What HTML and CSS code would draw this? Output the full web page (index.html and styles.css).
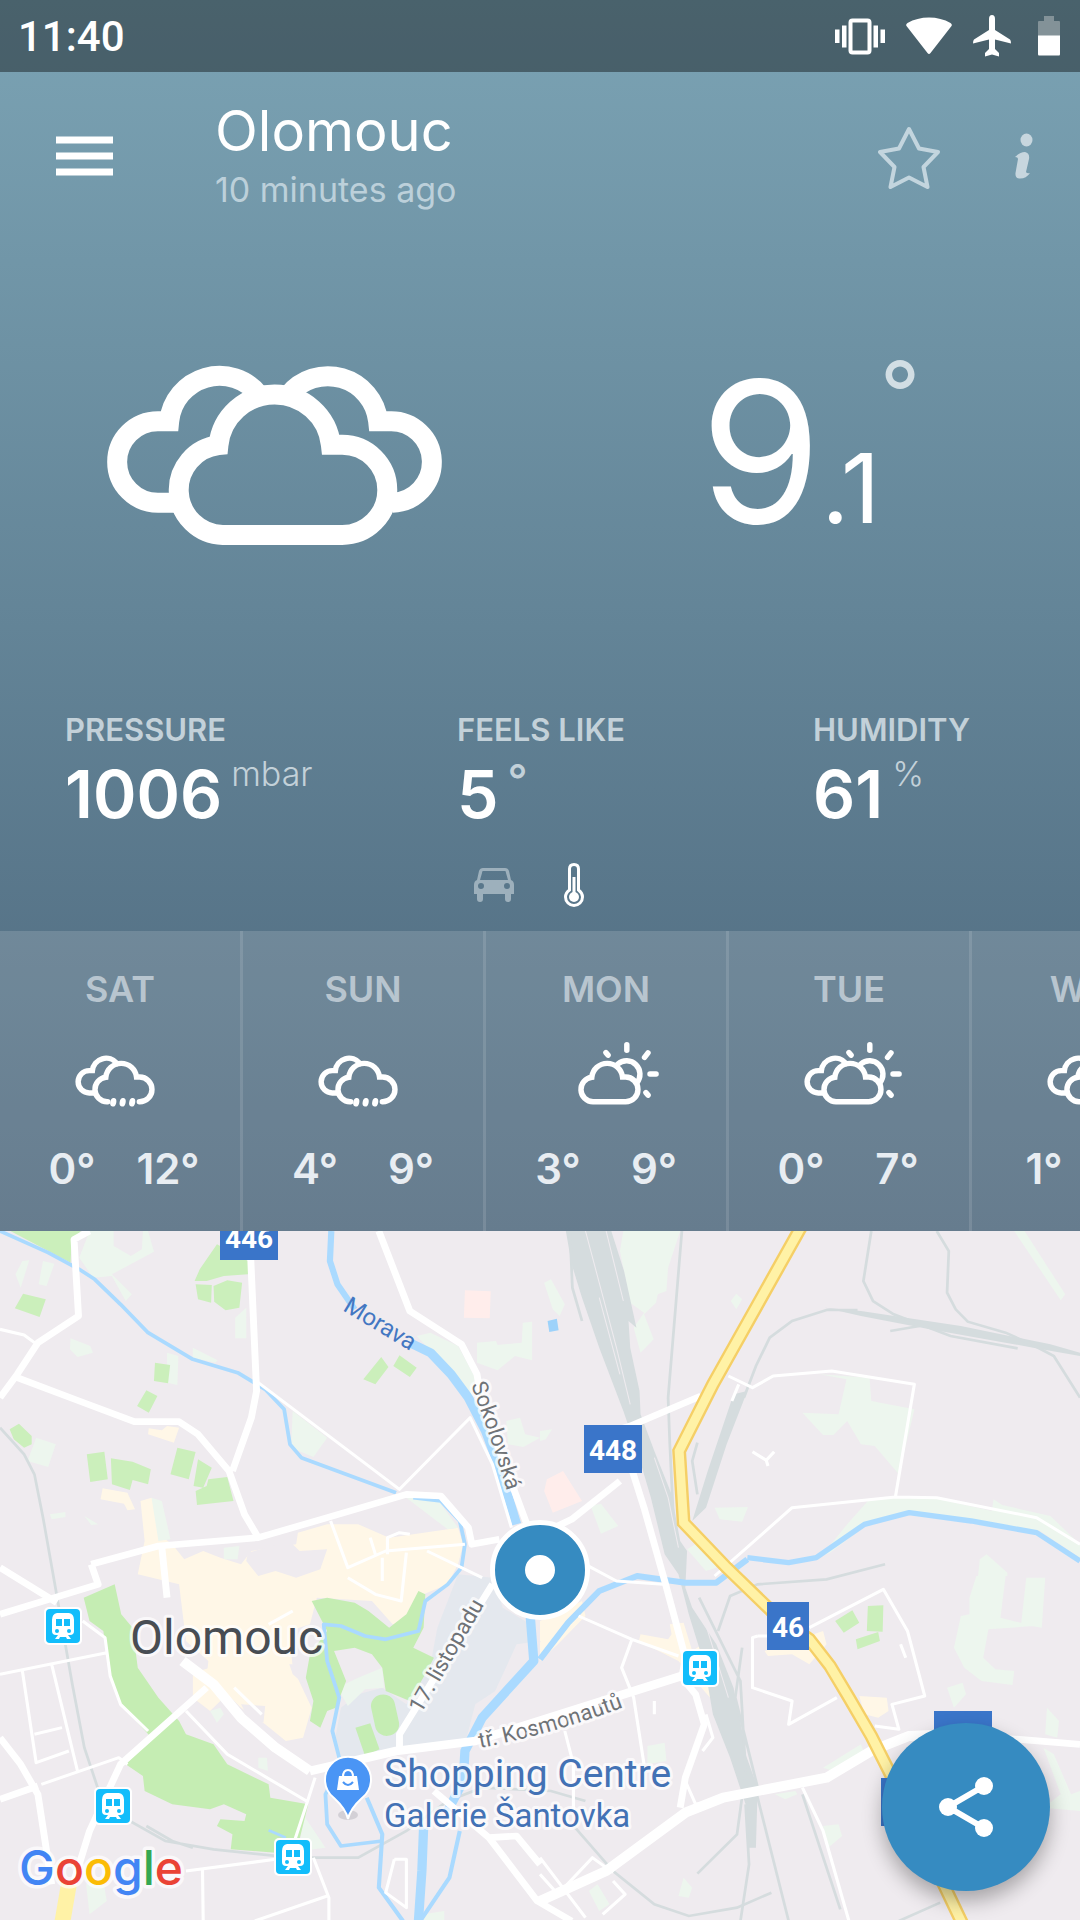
FILE: index.html
```
<!DOCTYPE html>
<html lang="en">
<head>
    <meta charset="UTF-8">
    <meta name="viewport" content="width=device-width, initial-scale=1.0">
    <title>Olomouc - Weather</title>
    <link rel="stylesheet" href="styles.css">
</head>
<body>
    <!-- Shared weather icon parts -->
    <svg class="defs" width="0" height="0" aria-hidden="true">
        <defs>
            <path id="cloud" d="M430 615A135.500 135.500 0 0 1 417 345A170 170 0 0 1 755 344H789A135.500 135.500 0 0 1 789 615Z"/>
            <path id="cloud-open" d="M438 615H430A135.500 135.500 0 0 1 417 345A170 170 0 0 1 755 344H789A135.500 135.500 0 0 1 789 615H786"/>
            <path id="cloud-left" d="M285 518H235A122.500 122.500 0 0 1 235 273H269A152 152 0 0 1 540 195"/>
            <path id="cloud-right" d="M940 518A122.500 122.500 0 0 0 932 273H897A152 152 0 0 0 627 195"/>
            <g id="drops">
                <ellipse cx="499" cy="621" rx="33" ry="47" transform="rotate(12 499 621)"/>
                <ellipse cx="602" cy="621" rx="33" ry="47" transform="rotate(12 602 621)"/>
                <ellipse cx="707" cy="621" rx="33" ry="47" transform="rotate(12 707 621)"/>
            </g>
            <g id="sun">
                <path d="M703 200A148 148 0 0 1 912 408"/>
                <path d="M802-13V50M997 127L1035 78M1057 310H1124M1012 515L1036 542M572 75L596 102"/>
            </g>
            <g id="train">
                <rect x="-19" y="-19" width="38" height="38" rx="5" fill="#fff"/>
                <rect x="-17" y="-17" width="34" height="34" rx="4" fill="#12bdfb"/>
                <path d="M-6-13H6Q11-12 11-6V5Q11 9 7 9H-7Q-11 9-11 5V-6Q-11-12-6-13Z" fill="#fff"/>
                <path d="M-7-7H-1V0H-7ZM1-7H7V0H1Z" fill="#12bdfb"/>
                <circle cx="-6" cy="5" r="2" fill="#12bdfb"/>
                <circle cx="6" cy="5" r="2" fill="#12bdfb"/>
                <path d="M-5 9L-8 13H-4L-3 11H3L4 13H8L5 9Z" fill="#fff"/>
            </g>
        </defs>
    </svg>

    <section class="weather">
        <div class="status-bar">
            <time class="clock">11:40</time>
            <div class="status-icons">
                <svg width="50" height="40" viewBox="0 0 50 40">
                    <rect x="15.500" y="4.500" width="19" height="32" rx="2" fill="none" stroke="#fff" stroke-width="4"/>
                    <path d="M0 13.500H4.500V27H0ZM7 9.500H11.500V31.500H7ZM38.500 9.500H43V31.500H38.500ZM45.500 13.500H50V27H45.500Z" fill="#fff"/>
                </svg>
                <svg width="46" height="40" viewBox="0 0 46 40">
                    <path d="M.5 10Q-.5 8.500 1.500 7Q11 1.500 23 1.500T44.500 7Q46.500 8.500 45.500 10L24.500 37Q23 39 21.500 37Z" fill="#fff"/>
                </svg>
                <svg width="38" height="42" viewBox="0 0 38 42">
                    <path d="M19 0Q22 0 22 4V15L37 24.500Q38 25.500 38 28.500L22 24.500V34L26 38V41.500L19 39.500L12 41.500V38L16 34V24.500L0 28.500Q0 25.500 1 24.500L16 15V4Q16 0 19 0Z" fill="#fff"/>
                </svg>
                <svg width="22" height="40" viewBox="0 0 22 40">
                    <path d="M6 0H16V5H21Q22 5 22 6V20H0V6Q0 5 1 5H6Z" fill="#839298"/>
                    <path d="M0 19.500H22V38Q22 39.500 21 39.500H1Q0 39.500 0 38Z" fill="#fff"/>
                </svg>
            </div>
        </div>

        <header class="top-bar">
            <button class="icon-button" type="button" aria-label="Menu">
                <svg width="57" height="40" viewBox="0 0 57 40">
                    <path d="M0 4H57M0 20H57M0 36H57" stroke="#fff" stroke-width="7"/>
                </svg>
            </button>
            <div class="place">
                <h1>Olomouc</h1>
                <p>10 minutes ago</p>
            </div>
            <button class="icon-button" type="button" aria-label="Add to favourites">
                <svg width="62" height="66" viewBox="0 0 62 66">
                    <path d="M31 6L41 25.500L60 29L45.500 44L49.500 64L31 54.500L12.500 64L16.500 44L2 29L21 25.500Z" fill="none" stroke="#c3d5de" stroke-width="4" stroke-linejoin="round"/>
                </svg>
            </button>
            <button class="icon-button" type="button" aria-label="Information">
                <svg width="20" height="46" viewBox="0 0 20 46">
                    <ellipse cx="12.500" cy="7" rx="6" ry="6.500" fill="#c7d6de"/>
                    <path d="M1 24Q6 19 11 19Q16 20 15 26L12 39Q13 41 16 40Q12 46 5 45.500Q1 45 1.500 40L4 26Q4 24 1 24Z" fill="#c7d6de"/>
                </svg>
            </button>
        </header>

        <div class="current">
            <svg class="current-icon" viewBox="82 104 1004 542" role="img" aria-label="Overcast">
                <use href="#cloud-left"/>
                <use href="#cloud-right"/>
                <use href="#cloud"/>
            </svg>
            <div class="temperature">
                <span class="whole">9</span><span class="decimal">.1</span><span class="degree">°</span>
            </div>
        </div>

        <dl class="metrics">
            <div>
                <dt>PRESSURE</dt>
                <dd>1006<span class="unit">mbar</span></dd>
            </div>
            <div>
                <dt>FEELS LIKE</dt>
                <dd>5<span class="unit unit-degree">°</span></dd>
            </div>
            <div>
                <dt>HUMIDITY</dt>
                <dd>61<span class="unit">%</span></dd>
            </div>
        </dl>

        <div class="modes">
            <button class="mode" type="button" aria-label="Driving">
                <svg width="40" height="34" viewBox="0 0 40 34">
                    <path fill-rule="evenodd" fill="#9db0bc" d="M9 0H31Q34 0 35 3L37 12Q40 13 40 17V26H37V31Q37 34 34 34T31 31V26H9V31Q9 34 6 34T3 31V26H0V17Q0 13 3 12L5 3Q6 0 9 0ZM9 3Q8 3 8 5L6 12H34L32 5Q32 3 31 3ZM7 15A3 3 0 1 0 7 21A3 3 0 1 0 7 15ZM33 15A3 3 0 1 0 33 21A3 3 0 1 0 33 15Z"/>
                </svg>
            </button>
            <button class="mode" type="button" aria-label="Thermometer">
                <svg width="20" height="44" viewBox="0 0 20 44">
                    <path d="M5.500 6Q5.500 1.500 10 1.500T14.500 6V27Q18.500 30 18.500 34A8.500 8.500 0 0 1 1.500 34Q1.500 30 5.500 27Z" fill="none" stroke="#fff" stroke-width="3"/>
                    <path d="M10 14V32" stroke="#fff" stroke-width="3"/>
                    <circle cx="10" cy="34" r="5" fill="#fff"/>
                </svg>
            </button>
        </div>

        <ul class="forecast">
            <li>
                <h2>SAT</h2>
                <svg class="day-icon" viewBox="-32 -75 1210 770" role="img" aria-label="Rain">
                    <use href="#cloud-left"/><use href="#cloud-open"/><use class="filled" href="#drops"/>
                </svg>
                <div class="range"><span>0°</span><span>12°</span></div>
            </li>
            <li>
                <h2>SUN</h2>
                <svg class="day-icon" viewBox="-32 -75 1210 770" role="img" aria-label="Rain">
                    <use href="#cloud-left"/><use href="#cloud-open"/><use class="filled" href="#drops"/>
                </svg>
                <div class="range"><span>4°</span><span>9°</span></div>
            </li>
            <li>
                <h2>MON</h2>
                <svg class="day-icon" viewBox="-32 -75 1210 770" role="img" aria-label="Partly cloudy">
                    <use href="#sun"/><use href="#cloud"/>
                </svg>
                <div class="range"><span>3°</span><span>9°</span></div>
            </li>
            <li>
                <h2>TUE</h2>
                <svg class="day-icon" viewBox="-32 -75 1210 770" role="img" aria-label="Mostly cloudy">
                    <use href="#cloud-left"/><use href="#sun"/><use href="#cloud"/>
                </svg>
                <div class="range"><span>0°</span><span>7°</span></div>
            </li>
            <li>
                <h2>WED</h2>
                <svg class="day-icon" viewBox="-32 -75 1210 770" role="img" aria-label="Mostly cloudy">
                    <use href="#cloud-left"/><use href="#sun"/><use href="#cloud"/>
                </svg>
                <div class="range"><span>1°</span><span>8°</span></div>
            </li>
        </ul>
    </section>

    <section class="map">
        <svg class="map-canvas" viewBox="0 0 1080 690" preserveAspectRatio="xMidYMin slice" role="img" aria-label="Map of Olomouc">
            <g transform="scale(.34439 .33333)">
                <!-- Built-up areas -->
                <g class="urban">
                    <path d="M408 810L440 800L460 850L480 925L500 940L535 985L590 960L640 980L700 1000L730 960L860 940L865 905L950 880L1040 880L1130 920L1230 905L1330 890L1345 940L1330 1000L1300 1060L1230 1090L1215 1160L1140 1180L1080 1110L920 1100L900 1180L840 1200L850 1310L905 1430L880 1520L830 1530L770 1480L700 1430L660 1390L600 1340L605 1290L540 1230L520 1060L400 1030L420 930Z"/>
                    <path d="M432 592L470 598L485 585L520 590L505 635L430 610ZM298 772L370 785L392 835L370 838L360 818L292 805Z"/>
                    <path d="M1568 1170L1690 1110L1700 1155L1620 1240L1568 1290ZM1860 1210L1940 1225L1950 1210L1945 1180L1985 1175L2010 1260L2040 1240L2070 1410L1970 1290L1855 1230ZM2220 1260L2390 1200L2400 1240L2350 1300L2300 1270L2230 1275ZM2495 1395L2575 1400L2580 1440L2550 1460L2510 1450Z"/>
                    <path d="M560 1325L610 1310L640 1410L610 1440L560 1400Z"/>
                </g>
                <g class="ground">
                    <path d="M720 965L840 930L870 960L950 955L930 1015L860 1040L800 1020L750 1035L715 990Z"/>
                    <path d="M840 1300L900 1300L895 1370L850 1330ZM700 1420L770 1425L765 1475L720 1460Z"/>
                </g>

                <!-- Campus -->
                <path class="campus" d="M1270 1190L1330 1030L1430 1040L1460 1130L1540 1180L1540 1310L1380 1420L1350 1540L1160 1570L1000 1590L970 1540L990 1430L1040 1390L1110 1370L1180 1420L1250 1300Z"/>

                <!-- Parks -->
                <g class="pale">
                    <path d="M260 0H430L447 62L325 130L383 190L365 210L325 135L270 140L230 80Z"/>
                    <path d="M45 130L65 90L85 88L60 170ZM125 90L158 98L135 165L112 160ZM205 322L262 345L270 365L225 378L203 355ZM485 365L518 375L515 462L485 455ZM560 350L632 388L625 395L560 380ZM683 260L715 230V322H683ZM850 540L950 620L910 678L845 650Z"/>
                    <path d="M105 620L162 640L140 708L80 690ZM145 850L190 843V858L150 865ZM245 855L285 880L265 882ZM440 800L470 810L495 925L460 930ZM650 950L695 945L690 985H650Z"/>
                    <path d="M1180 800L1270 805L1330 890L1300 895ZM1210 315L1250 305L1330 345L1380 440L1370 490ZM1385 335L1440 330L1445 342L1515 335L1518 275L1545 272V388L1495 375L1445 418L1385 395ZM1470 570L1510 560L1525 610L1568 620L1520 648L1475 640Z"/>
                    <path d="M1810 0H1975L1940 110L1935 180L1910 190L1905 215L1870 250L1898 325L1860 365L1840 290L1870 245L1830 215L1800 60ZM1580 155L1600 145L1640 220L1625 255L1605 235ZM2945 0H2975L3093 190L3080 208ZM2122 210L2138 188L2155 205L2138 235ZM1715 825L1745 818L1795 885L1745 908ZM2075 830L2172 828L2155 872L2090 865ZM1568 600L1603 595L1585 625L1568 630Z"/>
                    <path d="M2380 430L2525 440L2530 510L2655 535L2610 730L2540 645L2500 640L2460 570L2420 612H2390L2330 545L2435 550L2458 445ZM2385 975L2460 880L2520 810L2600 800H2710L2880 840L2885 805L2910 822L3050 855L3136 940V980L3020 900L2870 880L2640 850L2520 880L2410 965ZM2845 985L2865 970L2925 1025V1035H2840ZM1995 955L2050 920L2080 1010L2050 1020Z"/>
                    <path d="M2835 1035H2920L2905 1160L3000 1185L2870 1195L2855 1280L2890 1315L2945 1320L2940 1362L2850 1350L2800 1310L2770 1250L2790 1155L2815 1150L2815 1100ZM2980 1040H3035L3025 1190L2965 1180ZM2750 1370L2795 1355L2805 1390L2770 1430ZM3040 1430L3075 1470L3070 1520L3035 1510ZM3030 1550L3060 1570L3110 1690L3136 1680V1740L3030 1730L3080 1690ZM2390 1610L2500 1540L2510 1570L2420 1620ZM1880 1545L1930 1535L1935 1590L1880 1600ZM2390 1785L2435 1780L2445 1815L2405 1850ZM1985 1940L2010 1970L2000 2000L1970 1995ZM2250 1690L2310 1680L2315 1690L2280 1705Z"/>
                    <path d="M980 1370L1040 1340L1110 1310L1115 1370L1060 1375L1010 1425ZM880 1750L945 1850L870 1860ZM750 1580L775 1580L778 1620L750 1610ZM610 1440L640 1430L650 1450L630 1475ZM250 1960L300 1950L310 2010L260 2050ZM1710 1980L1735 1960L1770 2020L1740 2040ZM1230 2050L1290 2040V2070H1230Z"/>
                </g>
                <g class="park">
                    <path d="M30 0H235L208 30L205 95Z"/>
                    <path d="M565 150L580 115L610 70L630 40L720 90V130L650 135L600 150ZM568 160L615 162L613 215L575 205ZM620 165L660 148L703 155L695 230L655 238L622 212Z"/>
                    <path d="M67 188L133 205L115 258L43 232ZM450 395L494 402L488 457L447 450ZM425 478L457 495L432 545L398 525ZM1107 378L1128 408L1090 460L1055 445ZM1160 373L1210 410L1190 438L1142 405Z"/>
                    <path d="M55 578L92 615V640L70 650L40 625L28 595ZM252 670L303 662L313 745L262 753ZM322 682L385 692L438 715L430 760L385 747L377 777L325 760ZM515 650L568 663L548 745L495 730ZM575 685L615 710L590 770L562 765ZM568 780L600 765L605 745L660 738L678 810L572 822Z"/>
                    <path d="M2425 1170L2475 1138L2495 1175L2450 1205ZM2520 1125L2565 1123L2563 1202L2517 1200ZM2485 1225L2550 1203L2555 1230L2490 1255Z"/>
                </g>
                <g class="park deep">
                    <path d="M243 1100L333 1060L352 1150L385 1190L400 1310L460 1400L520 1470L540 1510L620 1540L660 1600L780 1660L785 1700L895 1720L860 1865H800L670 1855L675 1810L630 1785L640 1765L710 1770L715 1750L650 1720L610 1735L500 1720L420 1680L415 1635L365 1600L440 1520L350 1420L320 1340L300 1200L260 1170Z"/>
                    <path d="M905 1110L950 1100L1030 1115L1070 1140L1130 1190L1180 1150L1215 1080L1235 1090L1230 1190L1200 1250L1260 1280L1240 1320L1190 1410L1120 1380L1110 1310L1080 1270L1030 1250L970 1260L1005 1350L975 1430L950 1440L930 1490L900 1470L910 1410L888 1340L900 1270L950 1200Z"/>
                    <path d="M1032 1490L1075 1477L1102 1555L1060 1575Z"/>
                    <rect x="1083" y="1390" width="70" height="125" rx="34" transform="rotate(-12 1118 1452)"/>
                </g>
                <g class="hospital">
                    <path d="M1350 178L1425 181L1422 262L1347 260ZM1588 745L1635 720L1690 810L1605 845L1580 780Z"/>
                </g>
                <path class="ground" d="M330 0H415L412 55L380 75L330 45ZM1500 1240L1570 1230L1530 1330L1420 1420Z"/>

                <!-- Railways -->
                <g class="rail-area">
                    <path d="M1643 0H1775L1812 120L1848 290L1825 270L1830 350L1857 480L1860 550L1900 660L1950 790L1975 930L1995 960L1990 1070L2010 1130L2080 1240L2130 1370L2155 1500L2165 1570L2200 1670L2195 1850L2170 1850L2165 1720L2120 1580L2070 1450L2045 1300L2000 1150L1970 1030L1930 970L1890 800L1850 660L1810 540L1740 350L1690 200L1660 100Z"/>
                    <path d="M2395 230L2500 240L2790 285L3050 340L3136 365V375L3000 350L2700 295L2500 255ZM2130 490L2170 480L2110 640L2050 830L2010 870L2055 720Z"/>
                </g>
                <g class="rail">
                    <path d="M1655 0L1662 170L1690 270M1980 0L1940 500L1945 640L1960 960M2530 0L2507 150L2535 210L2595 250L2760 315L2955 352M2720 0L2755 60L2750 185L2775 235L2810 272L2920 305L3005 345L3060 375L3136 500M2585 300L2670 285"/>
                    <path d="M2160 500L2195 405L2235 320L2300 270L2400 237H2490M2025 635L2010 690L2025 790M2570 1000L2400 1045L2200 1060L2120 1095L2085 1200M2155 1250L2135 1400L2200 1670M2030 1100L2150 1350L2165 1620L2140 1810L2025 1928M2165 1720L2175 1900L2150 2070M2195 1680L2290 2070"/>
                    <path d="M0 590L70 670L100 730L125 860L155 1035L210 1360L245 1550L290 1690L360 1760L480 1830L620 1855L850 1880L1040 1880L1180 1800L1300 1710L1400 1670L1600 1680L1700 1710M425 1785L500 1830L560 1850M1670 1790L1780 1920L1900 2020L2000 2055L2140 2030L2240 1985M2330 1690L2440 2035M2610 2070L2730 2015"/>
                </g>
                <path class="rail-gap" d="M1700 0L1790 350L1830 520M1760 0L1810 210M1740 200L1800 430M1900 680L1940 800L1970 950M2040 1150L2115 1400"/>

                <!-- Rivers -->
                <g class="water">
                    <path stroke-width="11" d="M0 0L140 65L230 115L275 145L350 220L430 305L560 385L690 425L770 475L825 535L842 640L875 680L1150 785"/>
                    <path stroke-width="11" d="M1200 800L1280 810L1335 870L1350 940L1340 1010L1300 1060L1235 1110L1215 1200L1120 1225L1060 1215L990 1185L940 1180L950 1290L985 1400L965 1500L990 1600L945 1690L950 1780L990 1845L1110 1830"/>
                    <path stroke-width="18" d="M962 0L958 90L980 160L1030 235"/>
                    <path stroke-width="27" d="M1190 335L1250 365L1310 430L1360 500L1410 600L1450 710L1500 880"/>
                    <path stroke-width="27" d="M1540 1160L1550 1290L1400 1460L1350 1560L1345 1650L1300 1740"/>
                    <path stroke-width="27" d="M1230 1790L1225 1920L1215 2070"/>
                    <path stroke-width="12" d="M1065 1700L1110 1810L1100 1970L1170 2070M1335 1800L1305 1940L1220 2070"/>
                    <path stroke-width="18" d="M1568 1285L1650 1175L1740 1080L1850 1035L1990 1055H2080L2170 985"/>
                    <path stroke-width="16" d="M2170 980L2290 995L2370 980L2510 880L2640 845L2820 870L3010 905L3136 990"/>
                    <path stroke-width="8" d="M780 1798L830 1820"/>
                </g>
                <path class="pond" d="M1590 270L1617 263L1622 298L1595 303Z"/>

                <!-- Streets -->
                <g class="street main">
                    <path d="M260 0L215 25L228 255L110 335L50 430L0 500M50 440L230 510L390 572H520L575 610L665 720L710 850L750 920M728 80L745 480L730 560L675 720"/>
                    <path d="M1100 0L1190 240L1340 340L1385 430L1400 520L1530 880M265 1000L460 945L750 920L950 860L1180 790L1280 795L1360 890L1370 940L1450 925M265 1000L285 1060L0 1150M470 950L485 1100M0 1010L165 1115"/>
                    <path stroke-width="30" d="M530 1290L620 1360L700 1460L800 1550L900 1620"/>
                    <path stroke-width="26" d="M900 1620L1150 1560L1380 1530L1780 1400L1980 1335"/>
                    <path d="M600 1370L350 1600L260 1800L200 2000M0 1520L60 1600L110 1690L150 1960M0 1705L110 1665M1160 1560V1510L1430 1060"/>
                    <path d="M1568 910L1660 865L1800 750M1750 610L1830 585L2035 495M1830 700L1870 830L1930 1050L1990 1280L1980 1340L2020 1390L2045 1480L1990 1640L1975 1730"/>
                    <path stroke-width="30" d="M1568 2010L1760 1920L1990 1745L2100 1700L2400 1640L2530 1560L2640 1515L2760 1510"/>
                    <path d="M2760 1510L2960 1525L3136 1540M1260 1680L1420 1820L1560 2010L1660 2070M1420 1820L1500 1815L1568 1900"/>
                </g>
                <g class="street">
                    <path d="M0 295L70 312L100 335M750 455L1160 775L1365 560L1430 700L1485 890M240 1170L305 1220L320 1335L350 1420L430 1500M0 1330L310 1265M65 1320L105 1595L200 1560M150 1300L225 1620M100 1510L180 1490M120 1660L345 1580L370 1600"/>
                    <path d="M540 1440L660 1570L890 1710M915 1640L890 1720L855 1830M910 1880L955 2000V2070M540 1920L800 1885M588 1915L590 2070M740 2070L950 1995M960 870L1010 1010L1120 960L1350 940M1075 920L1090 970M1125 970V920L1160 905L1190 910M1240 960L1400 1040M1180 965L1165 1110L1090 1090L1010 1040M1110 980V1050M680 1370L760 1450M780 1180L850 1140"/>
                    <path d="M1568 980L1690 995L1790 1050L1925 1060M2075 1035L2300 830L2600 798L2720 800L3010 860L3136 940M2600 798L2655 460L2415 420L2245 435L2185 470L2115 435M2145 460L2125 510M2185 662L2225 688L2248 662M2225 688L2230 705"/>
                    <path d="M1680 1155L1835 1225L1970 1275M1835 1225L1805 1310L1840 1400L1870 1600M2200 1215L2185 1220V1370L2300 1410L2290 1480L2430 1400M2200 1215H2240M2350 1190L2565 1075L2635 1200L2685 1395L2590 1420L2610 1495L2540 1485M2330 1670L2390 1800L2465 2070M1640 1500L1665 1600V1740M2050 1450L2070 1520L2040 1560M1990 1650L2020 1720L2100 1710"/>
                    <path d="M1145 1885H1180V2030L1120 1985L1145 1885M1568 1880L1700 2060M1568 1930L1620 1990L1720 1880L1780 1925M1780 1950L1815 1990L1750 2050M1900 1410V1450M2615 1240L2630 1280"/>
                </g>
                <path class="highway-edge" d="M2325-10L2070 460L1972 660L1985 875L2110 1010L2250 1150L2350 1225L2410 1305L2465 1400L2530 1515L2620 1700L2740 1960L2800 2090"/>
                <path class="highway" d="M2325-10L2070 460L1972 660L1985 875L2110 1010L2250 1150L2350 1225L2410 1305L2465 1400L2530 1515L2620 1700L2740 1960L2800 2090"/>
                <path class="highway wide" d="M200 1960L180 2080"/>
            </g>

            <!-- Road number shields -->
            <g class="shields">
                <path d="M220-19H278V29H220ZM584 194H642V242H584ZM767 371H809V419H767ZM934 480H992V528H934ZM881 547H939V595H881Z"/>
                <text x="249" y="17">446</text>
                <text x="613" y="229">448</text>
                <text x="788" y="406">46</text>
            </g>

            <!-- Labels -->
            <path id="sokolovska" fill="none" d="M471 154Q489 200 510 270"/>
            <path id="kosmonautu" fill="none" d="M480 517Q555 503 640 470"/>
            <g class="labels">
                <text class="river-label" transform="translate(342 79) rotate(31)">Morava</text>
                <text class="street-label"><textPath href="#sokolovska">Sokolovská</textPath></text>
                <text class="street-label" transform="translate(421 483) rotate(-60)">17. listopadu</text>
                <text class="street-label"><textPath href="#kosmonautu">tř. Kosmonautů</textPath></text>
                <text class="city-label" x="130" y="423">Olomouc</text>
                <text class="poi-label" x="384" y="556">Shopping Centre</text>
                <text class="poi-label small" x="384" y="596">Galerie Šantovka</text>
            </g>

            <use href="#train" x="63" y="395"/>
            <use href="#train" x="113" y="575"/>
            <use href="#train" x="293" y="626"/>
            <use href="#train" x="700" y="437"/>

            <!-- Shopping pin -->
            <ellipse cx="348" cy="584" rx="10" ry="5" fill="#d3d0d6"/>
            <path d="M348 588Q346 578 334 567A23 23 0 1 1 362 567Q350 578 348 588Z" fill="#4a95f5" stroke="#fff" stroke-width="2"/>
            <path d="M339 545H357L359 559H337Z" fill="#fff"/>
            <path d="M343 546Q343 539 348 539T353 546" fill="none" stroke="#fff" stroke-width="2"/>
            <path d="M343 551Q348 557 353 551" fill="none" stroke="#4a95f5" stroke-width="2"/>

            <text class="google" x="19" y="654"><tspan fill="#4285f4">G</tspan><tspan fill="#ea4335">o</tspan><tspan fill="#fbbc05">o</tspan><tspan fill="#4285f4">g</tspan><tspan fill="#34a853">l</tspan><tspan fill="#ea4335">e</tspan></text>

            <!-- Current location -->
            <circle cx="540" cy="339" r="30" fill="#fff" stroke="#fff" stroke-width="40"/>
            <circle cx="540" cy="339" r="30" fill="#fff" stroke="#368bc1" stroke-width="30"/>
        </svg>

        <button class="share" type="button" aria-label="Share">
            <svg width="54" height="60" viewBox="0 0 54 60">
                <path d="M45 9L9 30L45 51" fill="none" stroke="#fff" stroke-width="6"/>
                <circle cx="45" cy="9" r="9" fill="#fff"/>
                <circle cx="9" cy="30" r="9" fill="#fff"/>
                <circle cx="45" cy="51" r="9" fill="#fff"/>
            </svg>
        </button>
    </section>
</body>
</html>
```
FILE: styles.css
```
* {
    box-sizing: border-box;
}

body {
    margin: 0;
    min-height: 100vh;
    display: flex;
    flex-direction: column;
    font-family: Inter, "Open Sans", sans-serif;
    color: white;
    overflow-x: hidden;
}

h1, h2, p, dl, dd, ul {
    margin: 0;
    padding: 0;
}

button {
    padding: 0;
    border: none;
    background: none;
    cursor: pointer;
}

svg {
    display: block;
}

.defs {
    position: absolute;
}

/* Weather panel */
.weather {
    background: linear-gradient(#7ba3b4, #4c667b);
}

.status-bar {
    display: flex;
    align-items: center;
    justify-content: space-between;
    height: 72px;
    padding: 0 20px 0 18px;
    background: rgba(0, 0, 0, 0.4);
}

.clock {
    font-family: Roboto, sans-serif;
    font-size: 42px;
    font-weight: 500;
    line-height: 52px;
    padding-top: 2px;
}

.status-icons {
    display: flex;
    align-items: center;
    gap: 21px;
}

.status-icons svg:last-child {
    margin-left: 6px;
}

/* Top bar */
.top-bar {
    display: flex;
    align-items: center;
    padding: 27px 46px 0 56px;
}

.place {
    flex: 1;
    margin-left: 102px;
}

.place h1 {
    font-size: 56px;
    font-weight: 400;
    line-height: 64px;
}

.place p {
    margin-top: 5px;
    font-size: 34px;
    line-height: 44px;
    color: #bcd0da;
}

.icon-button + .icon-button {
    margin-left: 74px;
}

/* Current weather */
.current {
    display: grid;
    grid-template-columns: 1fr 1fr;
    place-items: center;
    height: 486px;
}

.current-icon {
    width: 334px;
    margin-left: 8px;
    overflow: visible;
}

.current-icon, .day-icon {
    fill: none;
    stroke: white;
    stroke-width: 60;
}

.temperature {
    display: flex;
    align-items: baseline;
    padding-bottom: 6px;
    line-height: 1;
}

.whole {
    font-size: 196px;
}

.decimal {
    font-size: 96px;
}

.degree {
    align-self: flex-start;
    font-size: 88px;
    line-height: 78px;
    color: #d2dee4;
}

/* Pressure, feels like, humidity */
.metrics {
    display: grid;
    grid-template-columns: 392fr 356fr 202fr;
    padding: 14px 65px 0;
}

.metrics dt {
    font-size: 31px;
    font-weight: 600;
    line-height: 36px;
    color: #c3d1d9;
}

.metrics dd {
    display: flex;
    align-items: flex-start;
    gap: 9px;
    margin-top: 10px;
    font-size: 66px;
    font-weight: 600;
    line-height: 72px;
}

.unit {
    font-size: 34px;
    font-weight: 300;
    line-height: 32px;
    color: #c3d1d9;
}

.unit-degree {
    font-size: 44px;
    font-weight: 500;
    line-height: 44px;
}

.modes {
    display: flex;
    justify-content: center;
    gap: 20px;
    padding: 33px 12px 24px 0;
}

.mode {
    display: flex;
    align-items: center;
    justify-content: center;
    width: 60px;
    height: 44px;
}

/* Forecast */
.forecast {
    display: flex;
    height: 300px;
    overflow: hidden;
    list-style: none;
    background: rgba(255, 255, 255, 0.15);
}

.forecast li {
    flex: 0 0 22.5%;
    padding-top: 36px;
    border-right: 3px solid rgba(255, 255, 255, 0.12);
    text-align: center;
}

.forecast h2 {
    font-size: 36px;
    font-weight: 600;
    line-height: 44px;
    color: #b8c5cf;
}

.day-icon {
    width: 110px;
    height: 70px;
    margin: 28px auto 0;
    stroke-linecap: round;
}

.filled {
    fill: white;
    stroke: none;
}

.range {
    display: grid;
    grid-template-columns: 1fr 1fr;
    margin-top: 36px;
    padding: 0 24px;
    font-size: 42px;
    font-weight: 600;
    line-height: 48px;
    color: #e8edf2;
}

/* Map */
.map {
    position: relative;
    flex: 1;
    min-height: 690px;
    overflow: hidden;
    background: #efebef;
}

.map-canvas {
    position: absolute;
    width: 100%;
    height: 100%;
    font-family: Roboto, sans-serif;
}

.urban {
    fill: #fff7e7;
}

.ground {
    fill: #efebef;
}

.campus {
    fill: #e4e8ee;
}

.pale {
    fill: #edf6ee;
}

.park {
    fill: #cbefbb;
}

.deep {
    fill: #c5edb3;
}

.hospital {
    fill: #ffedeb;
}

.pond {
    fill: #9dd2fa;
}

.rail-area {
    fill: #d5dcde;
}

.rail {
    fill: none;
    stroke: #d5dcde;
    stroke-width: 8;
}

.rail-gap {
    fill: none;
    stroke: #efebef;
    stroke-width: 3;
}

.water {
    fill: none;
    stroke: #aadaff;
    stroke-linejoin: round;
}

.street {
    fill: none;
    stroke: white;
    stroke-width: 9;
    stroke-linejoin: round;
}

.main {
    stroke-width: 20;
}

.highway-edge {
    fill: none;
    stroke: #f5cf66;
    stroke-width: 40;
}

.highway {
    fill: none;
    stroke: #fff2a6;
    stroke-width: 26;
}

.wide {
    stroke-width: 46;
}

.shields {
    fill: #3a75c9;
}

.shields text {
    fill: white;
    font-size: 28px;
    font-weight: 700;
    text-anchor: middle;
}

.labels text {
    paint-order: stroke;
    stroke: rgba(255, 255, 255, 0.7);
    stroke-width: 6px;
    stroke-linejoin: round;
}

.labels .street-label {
    font-size: 22px;
    fill: #6f7377;
}

.labels .river-label {
    font-size: 24px;
    fill: #4377c2;
    stroke: none;
}

.city-label {
    font-size: 48px;
    fill: #484d53;
}

.poi-label {
    font-size: 39px;
    fill: #4372b5;
}

.small {
    font-size: 33px;
}

.google {
    font-family: Inter, sans-serif;
    font-size: 48px;
    font-weight: 500;
    paint-order: stroke;
    stroke: rgba(255, 255, 255, 0.7);
    stroke-width: 7px;
    stroke-linejoin: round;
}

/* Share button */
.share {
    position: absolute;
    right: 30px;
    bottom: 30px;
    display: flex;
    align-items: center;
    justify-content: center;
    width: 168px;
    height: 168px;
    border-radius: 50%;
    background: #368bc1;
    box-shadow: 0 10px 20px rgba(0, 0, 0, 0.3);
}
```
